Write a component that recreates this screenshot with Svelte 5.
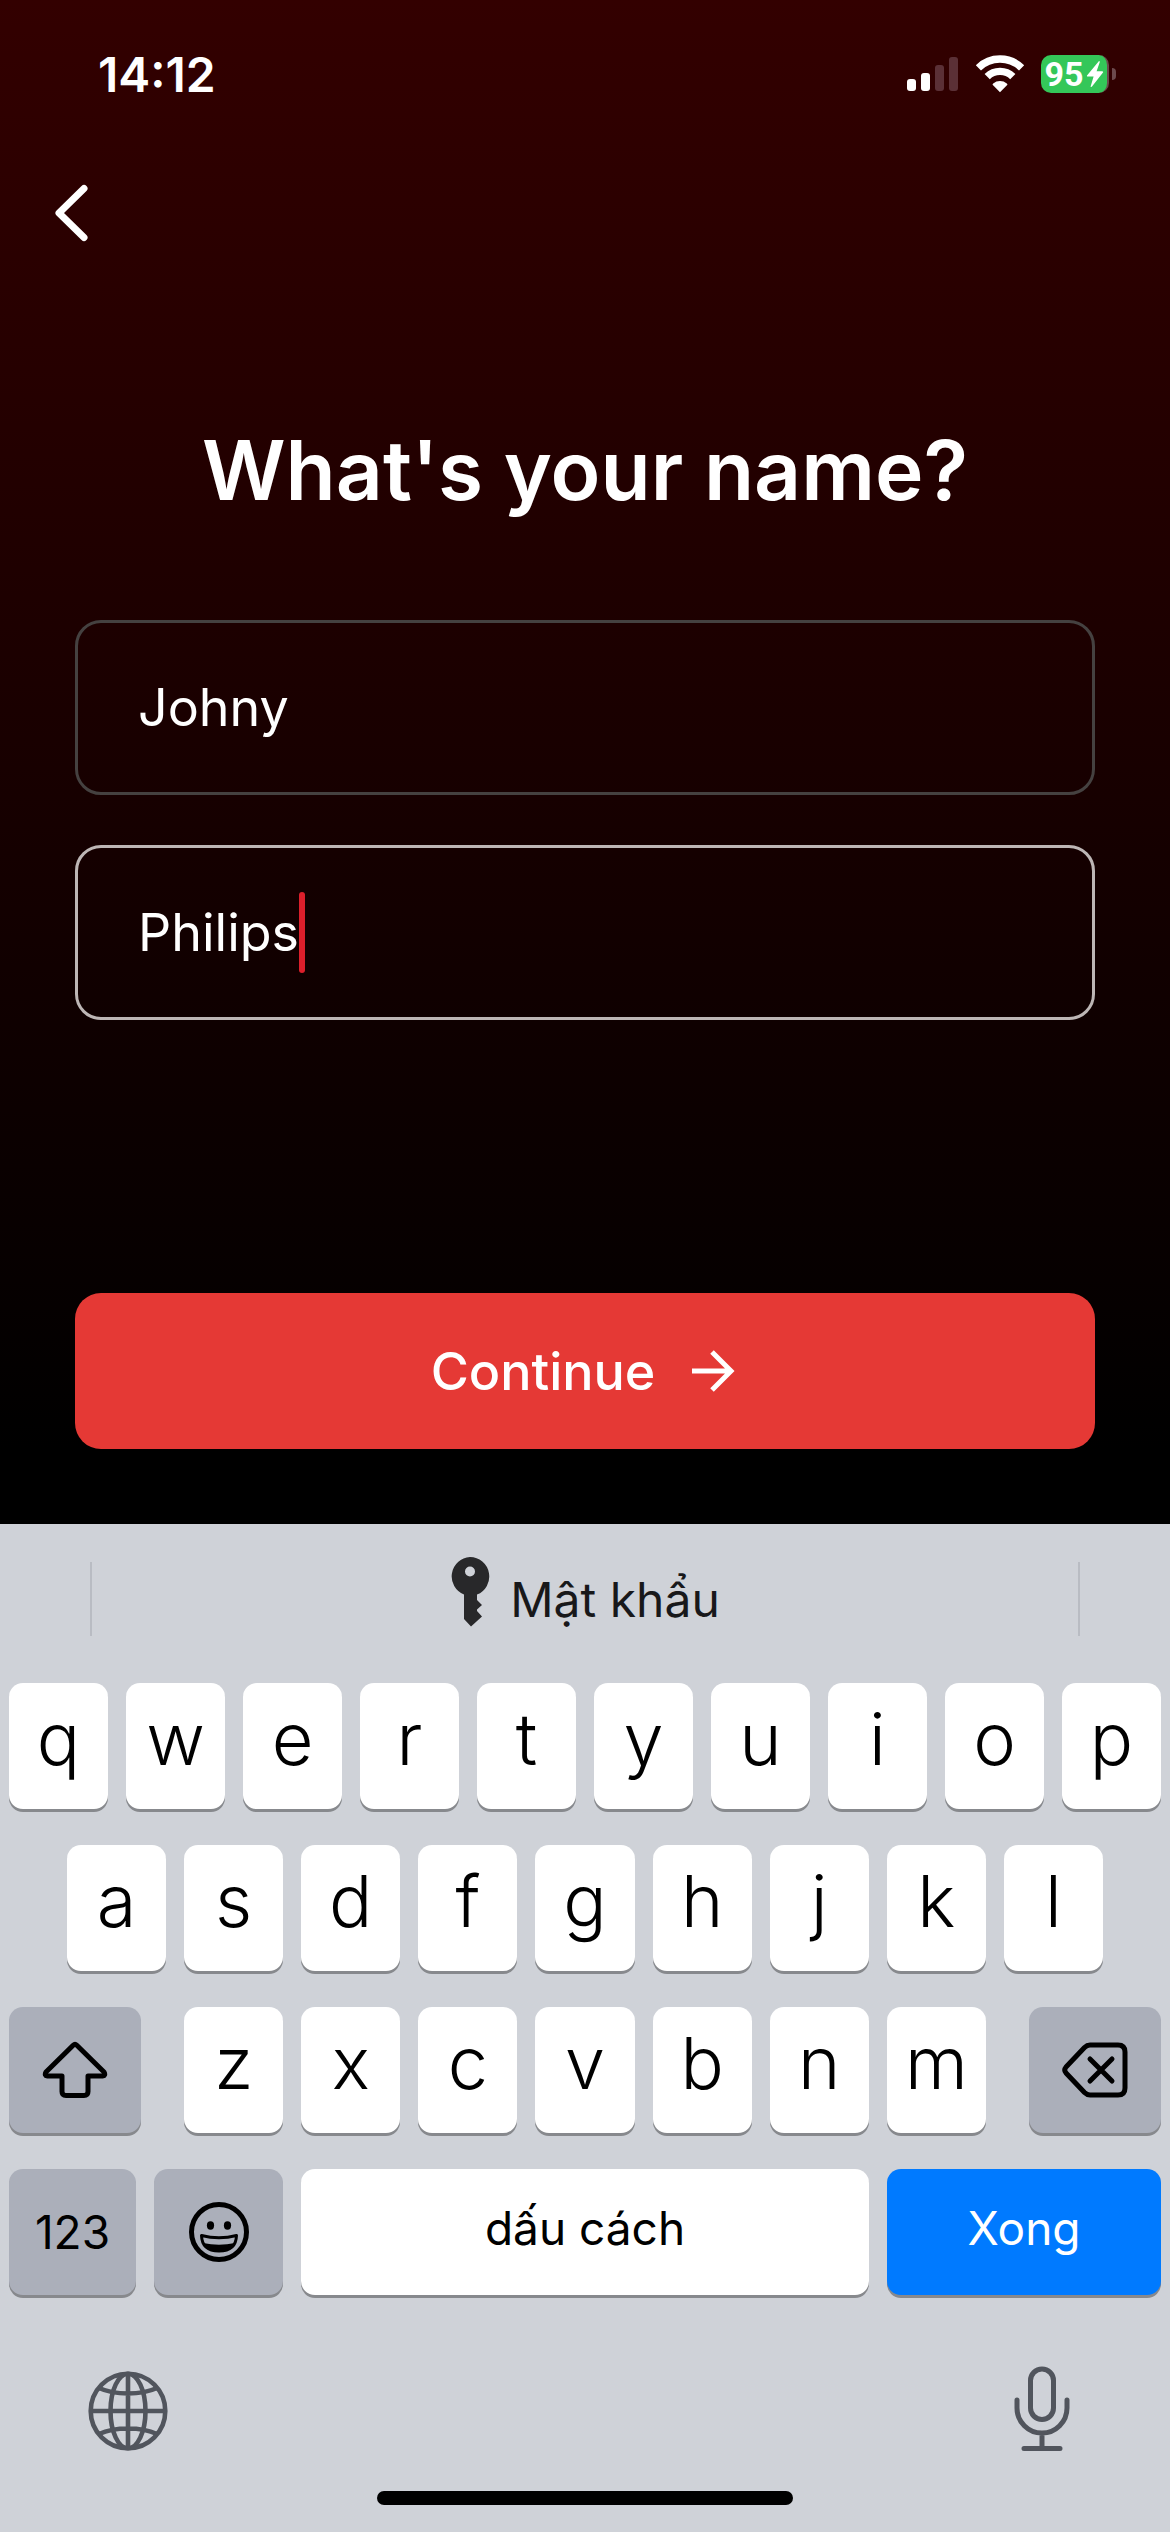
<script lang="ts">
  let firstName = $state("Johny");
  let lastName = $state("Philips");
  let active = $state<"first" | "last">("last");

  const topRow = [..."qwertyuiop"];
  const homeRow = [..."asdfghjkl"];
  const bottomRow = [..."zxcvbnm"];

  function type(char: string) {
    if (active === "first") firstName += char;
    else lastName += char;
  }

  function erase() {
    if (active === "first") firstName = firstName.slice(0, -1);
    else lastName = lastName.slice(0, -1);
  }
</script>

{#snippet letters(chars: string[])}
  {#each chars as char (char)}
    <button type="button" class="key letter" onclick={() => type(char)}>{char}</button>
  {/each}
{/snippet}

<div class="screen">
  <header class="status">
    <time>14:12</time>
    <div class="indicators">
      <svg width="52" height="36" viewBox="0 0 52 36" aria-hidden="true">
        <rect x="0" y="23" width="9" height="12" rx="3" fill="#fff" />
        <rect x="14" y="17" width="9" height="18" rx="3" fill="#fff" />
        <rect x="28" y="9" width="9" height="26" rx="3" fill="#5b3036" />
        <rect x="42" y="1" width="9" height="34" rx="3" fill="#5b3036" />
      </svg>
      <svg width="50" height="38" viewBox="0 0 50 38" aria-hidden="true">
        <g fill="none" stroke="#fff" stroke-width="7.4">
          <path d="M3.4 12.8a31 31 0 0 1 43.2 0" />
          <path d="M12.2 21.6a18.2 18.2 0 0 1 25.6 0" />
        </g>
        <path d="M25 37.2 17.6 29.8Q17.4 29 18.2 28.4a10.8 10.8 0 0 1 13.6 0Q32.6 29 32.4 29.8Z" fill="#fff" />
      </svg>
      <div class="battery">
        <span class="level">
          95
          <svg width="18" height="26" viewBox="0 0 18 26" aria-hidden="true">
            <path d="M13 0 1 14.5Q.6 15.6 2 15.6H7.6L4.6 25.4Q5 26.4 6 25.6L17 11.6Q17.6 10.2 16 10.2H10.6L13.8 1Q13.8 0 13 0Z" fill="#fff" />
          </svg>
        </span>
      </div>
    </div>
  </header>

  <main>
    <button type="button" class="back" aria-label="Back">
      <svg width="36" height="60" viewBox="0 0 36 60" aria-hidden="true">
        <path d="M31 5.5 6 30 31 54.5" fill="none" stroke="#fff" stroke-width="7" stroke-linecap="round" stroke-linejoin="round" />
      </svg>
    </button>

    <h1>What's your name?</h1>

    <div class="fields">
      <label class="field" class:active={active === "first"}>
        <input type="text" aria-label="First name" bind:value={firstName} onfocus={() => (active = "first")} />
        {#if active === "first"}<span class="caret"></span>{/if}
      </label>
      <label class="field" class:active={active === "last"}>
        <input type="text" aria-label="Last name" bind:value={lastName} onfocus={() => (active = "last")} />
        {#if active === "last"}<span class="caret"></span>{/if}
      </label>
    </div>

    <button type="button" class="continue">
      Continue
      <svg width="48" height="42" viewBox="0 0 48 42" aria-hidden="true">
        <path d="M1 21H40M21 2 40 21 21 40" fill="none" stroke="#fff" stroke-width="5" />
      </svg>
    </button>
  </main>

  <section class="keyboard">
    <div class="suggestions">
      <button type="button" class="suggestion">
        <svg width="40" height="70" viewBox="0 0 40 70" aria-hidden="true">
          <path
            fill="#28282a"
            fill-rule="evenodd"
            d="M20 0a19.5 19.5 0 0 1 7 37.6V43l5 5-5 4.5v1.5l5 5.5-11 10L14 62V37.6A19.5 19.5 0 0 1 20 0ZM20 9.5a5 5 0 1 0 0 10 5 5 0 0 0 0-10Z"
          />
        </svg>
        Mật khẩu
      </button>
    </div>

    <div class="rows">
      <div class="row">{@render letters(topRow)}</div>
      <div class="row home">{@render letters(homeRow)}</div>
      <div class="row">
        <button type="button" class="key dark shift" aria-label="Shift">
          <svg width="66" height="58" viewBox="0 0 66 58" aria-hidden="true">
            <path
              d="M31.2 4.2Q33 2.5 34.8 4.2L62 31Q64 34.5 60.5 35H46V50.5Q46 54.5 42 54.5H24Q20 54.5 20 50.5V35H5.5Q2 34.5 4 31Z"
              fill="none"
              stroke="#000"
              stroke-width="5"
              stroke-linejoin="round"
            />
          </svg>
        </button>
        {@render letters(bottomRow)}
        <button type="button" class="key dark erase" aria-label="Delete" onclick={erase}>
          <svg width="66" height="56" viewBox="0 0 66 56" aria-hidden="true">
            <g fill="none" stroke="#000" stroke-width="5" stroke-linecap="round" stroke-linejoin="round">
              <path d="M28 3H56Q63 3 63 10V46Q63 53 56 53H28Q25 53 22.5 50.5L4 31Q1.5 28 4 25L22.5 5.500Q25 3 28 3Z" />
              <path d="M28 17 50 39M50 17 28 39" />
            </g>
          </svg>
        </button>
      </div>
      <div class="row">
        <button type="button" class="key dark numbers">123</button>
        <button type="button" class="key dark emoji" aria-label="Emoji">
          <svg width="60" height="60" viewBox="0 0 60 60" aria-hidden="true">
            <circle cx="30" cy="30" r="27.5" fill="none" stroke="#000" stroke-width="5" />
            <ellipse cx="21.5" cy="23.5" rx="3.6" ry="4.2" />
            <ellipse cx="38.5" cy="23.5" rx="3.6" ry="4.2" />
            <path d="M12.5 33.5Q30 38 47.5 33.5 47 49 30 49 13 49 12.5 33.5Z" fill="none" stroke="#000" stroke-width="3" stroke-linejoin="round" />
            <path d="M14 41Q30 44.5 46 41 42 50 30 50 18 50 14 41Z" />
          </svg>
        </button>
        <button type="button" class="key space" onclick={() => type(" ")}>dấu cách</button>
        <button type="button" class="key done">Xong</button>
      </div>
    </div>

    <div class="tools">
      <button type="button" aria-label="Change language">
        <svg width="80" height="80" viewBox="0 0 80 80" aria-hidden="true">
          <g fill="none" stroke="#51555d" stroke-width="4.6">
            <circle cx="40" cy="40" r="37.3" />
            <ellipse cx="40" cy="40" rx="17.5" ry="37.3" />
            <path d="M40 3V77M3 40H77M11 17Q23 22.5 40 22.5T69 17M11 63Q23 57.5 40 57.5T69 63" />
          </g>
        </svg>
      </button>
      <button type="button" aria-label="Dictate">
        <svg width="80" height="86" viewBox="0 0 80 86" aria-hidden="true">
          <g fill="none" stroke="#51555d" stroke-width="5" stroke-linecap="round">
            <rect x="28.5" y="4" width="23" height="50.5" rx="11.5" />
            <path d="M15 35V43a25 25 0 0 0 50 0V35M40 68V83M22 83.5H58" />
          </g>
        </svg>
      </button>
    </div>

    <div class="home-bar"></div>
  </section>
</div>

<style>
  :global(body) {
    margin: 0;
    background: #000;
  }

  .screen {
    display: flex;
    flex-direction: column;
    min-height: 100vh;
    font-family: Inter, Roboto, "Noto Sans", sans-serif;
    color: #fff;
    background: linear-gradient(#330000 0, #000 1450px);
  }

  button {
    padding: 0;
    border: 0;
    background: none;
    color: inherit;
    font: inherit;
    cursor: pointer;
  }

  svg {
    display: block;
    flex: none;
  }

  .status {
    display: flex;
    align-items: center;
    justify-content: space-between;
    height: 148px;
    padding: 0 54px 0 98px;
  }

  time {
    font-size: 48px;
    font-weight: 600;
  }

  .indicators {
    display: flex;
    align-items: center;
    gap: 16px;
  }

  .battery {
    display: flex;
    align-items: center;
    gap: 3px;
  }

  .battery::after {
    content: "";
    width: 4px;
    height: 12px;
    border-radius: 0 4px 4px 0;
    background: #6c4a4d;
  }

  .level {
    display: flex;
    align-items: center;
    justify-content: center;
    gap: 2px;
    width: 66px;
    height: 38px;
    border-right: 2px solid #6c4a4d;
    border-radius: 10px;
    background: #34c759;
    font-family: Roboto, Inter, sans-serif;
    font-size: 34px;
    font-weight: 700;
  }

  main {
    flex: 1;
    display: flex;
    flex-direction: column;
    padding: 0 75px 75px;
  }

  .back {
    align-self: flex-start;
    margin: 35px 0 0 -22px;
  }

  h1 {
    margin: 176px 0 0;
    font-size: 82px;
    font-weight: 600;
    line-height: 104px;
    text-align: center;
  }

  .fields {
    display: flex;
    flex-direction: column;
    gap: 50px;
    margin-top: 97px;
  }

  .field {
    box-sizing: border-box;
    display: flex;
    align-items: center;
    height: 175px;
    padding: 0 60px;
    border: 3px solid #454140;
    border-radius: 26px;
    cursor: text;
  }

  .field.active {
    border-color: #bdb6b5;
  }

  input {
    field-sizing: content;
    padding: 0;
    border: 0;
    outline: 0;
    background: none;
    color: #fff;
    font: inherit;
    font-size: 52px;
    caret-color: transparent;
  }

  .caret {
    width: 6px;
    height: 81px;
    border-radius: 3px;
    background: #dc1f2b;
  }

  .continue {
    display: flex;
    align-items: center;
    justify-content: center;
    gap: 36px;
    height: 156px;
    margin-top: auto;
    border-radius: 26px;
    background: #e53935;
    font-size: 52px;
    font-weight: 500;
  }

  .keyboard {
    padding: 38px 0 27px;
    background: #cfd2d8;
    color: #000;
  }

  .suggestions {
    display: flex;
    justify-content: center;
    height: 74px;
    margin: 0 90px;
    border: solid #b9bcc3;
    border-width: 0 2px;
  }

  .suggestion {
    display: flex;
    align-items: center;
    gap: 20px;
    color: #18181a;
    font-size: 48px;
  }

  .suggestion svg {
    align-self: flex-start;
    margin-top: -5px;
  }

  .rows {
    display: flex;
    flex-direction: column;
    gap: 36px;
    margin-top: 47px;
    padding: 0 9px;
  }

  .row {
    display: flex;
    gap: 18px;
  }

  .home {
    padding: 0 58px;
  }

  .key {
    display: flex;
    align-items: center;
    justify-content: center;
    box-sizing: border-box;
    height: 126px;
    border-radius: 14px;
    background: #fff;
    box-shadow: 0 3px 0 #87898d;
    font-size: 46px;
  }

  .letter {
    flex: 99 1 0;
    padding-bottom: 16px;
    font-size: 72px;
    font-weight: 300;
  }

  .dark {
    background: #abafba;
  }

  .shift,
  .erase {
    flex: 132 1 0;
  }

  .shift {
    margin-right: 25px;
  }

  .erase {
    margin-left: 25px;
  }

  .numbers {
    flex: 127 1 0;
  }

  .emoji {
    flex: 129 1 0;
  }

  .space {
    flex: 568 1 0;
    padding-bottom: 8px;
  }

  .done {
    flex: 274 1 0;
    padding-bottom: 8px;
    background: #007aff;
    color: #fff;
  }

  .tools {
    display: flex;
    align-items: flex-end;
    justify-content: space-between;
    margin-top: 70px;
    padding: 0 88px;
  }

  .home-bar {
    width: 416px;
    height: 14px;
    margin: 40px auto 0;
    border-radius: 7px;
    background: #000;
  }
</style>
